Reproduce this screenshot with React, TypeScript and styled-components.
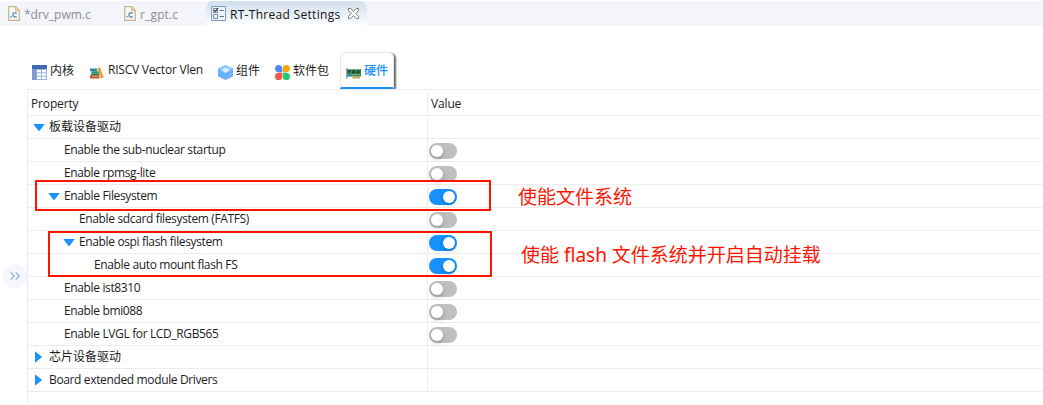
import React from "react";
import styled, { createGlobalStyle } from "styled-components";

const Global = createGlobalStyle`
  * { box-sizing: border-box; }
  body { margin: 0; background: #fff; overflow: hidden; }
  svg { display: block; flex: none; }
`;

const Page = styled.main`
  position: relative;
  width: 1043px;
  height: 405px;
  display: flex;
  flex-direction: column;
  background: #fff;
  color: #1c1c1c;
  font-family: "Open Sans", "Noto Sans CJK SC", sans-serif;
  font-size: 12px;
`;

const Label = styled.span<{ $track?: number }>`
  white-space: pre;
  letter-spacing: ${(p) => p.$track ?? 0}px;
`;

const EditorBar = styled.header`
  height: 26px;
  padding-top: 1px;
  display: flex;
  background: linear-gradient(#fff 1px, #f4f5fb 1px);
  border-top-left-radius: 6px;
`;

const EditorTab = styled.div<{ $width: number; $active?: boolean }>`
  width: ${(p) => p.$width}px;
  height: 25px;
  padding-left: ${(p) => (p.$active ? 5 : 8)}px;
  display: flex;
  align-items: center;
  gap: 4px;
  color: ${(p) => (p.$active ? "#111" : "#8b8c92")};
  background: ${(p) => (p.$active ? "linear-gradient(#d0dfed, #fff)" : "transparent")};
  border-radius: ${(p) => (p.$active ? "7px 7px 0 0" : "0")};

  ${Label} {
    padding-top: 2px;
  }
`;

const CloseSlot = styled.span`
  margin-left: 3px;
`;

const CategoryBar = styled.nav`
  height: 63px;
  padding-left: 28px;
  display: flex;
  align-items: flex-end;
`;

const Category = styled.div<{ $width: number; $active?: boolean }>`
  width: ${(p) => p.$width}px;
  height: 37px;
  padding: 0 0 0 ${(p) => (p.$active ? 5 : 4)}px;
  display: flex;
  align-items: center;
  gap: 3px;
  color: ${(p) => (p.$active ? "#1890ff" : "#1c1c1c")};
  font-weight: ${(p) => (p.$active ? 500 : 400)};
  border: ${(p) => (p.$active ? "1px solid #e6e6e6" : "0")};
  border-bottom: 2px solid ${(p) => (p.$active ? "#1890ff" : "transparent")};
  border-radius: ${(p) => (p.$active ? "6px 6px 0 0" : "0")};
  box-shadow: ${(p) => (p.$active ? "2px 1px 2px -0.5px #666" : "none")};
  clip-path: inset(-4px -6px 0 -4px);

  svg {
    margin-top: 6px;
  }
`;

const Table = styled.section`
  margin-left: 27px;
  border-left: 1px solid #ececec;
  height: 316px;
`;

const Row = styled.div<{ $head?: boolean }>`
  display: grid;
  grid-template-columns: 399px 1fr;
  height: ${(p) => (p.$head ? 27 : 23)}px;
  border-top: ${(p) => (p.$head ? "1px solid #ececec" : "0")};
  border-bottom: 1px solid #ececec;
`;

const NameCell = styled.div<{ $indent: number; $head?: boolean }>`
  display: flex;
  align-items: center;
  padding-left: ${(p) => p.$indent}px;
  padding-top: ${(p) => (p.$head ? 1 : 0)}px;
`;

const ValueCell = styled.div<{ $head?: boolean }>`
  display: flex;
  align-items: center;
  border-left: 1px solid #ececec;
  margin: ${(p) => (p.$head ? "3px 0 2px" : "0")};
  padding-left: ${(p) => (p.$head ? 3 : 1)}px;
  padding-top: ${(p) => (p.$head ? 0 : 2)}px;
`;

const ItemText = styled(Label)`
  margin-top: -2px;
`;

const Caret = styled.span`
  width: 16px;
  display: flex;
`;

const Switch = styled.span<{ $on: boolean }>`
  width: 28px;
  height: 16px;
  padding: 2px;
  display: flex;
  justify-content: ${(p) => (p.$on ? "flex-end" : "flex-start")};
  border-radius: 8px;
  background: ${(p) => (p.$on ? "#1890ff" : "#bfbfbf")};
`;

const Knob = styled.span`
  width: 12px;
  height: 12px;
  border-radius: 6px;
  background: #fff;
  box-shadow: 0 2px 4px rgba(0, 35, 11, 0.25);
`;

const Expander = styled.button`
  position: absolute;
  left: 3px;
  top: 264px;
  width: 24px;
  height: 24px;
  padding: 0;
  border: 0;
  border-radius: 12px;
  background: #f4f6fb;
  display: flex;
  align-items: center;
  justify-content: center;
`;

const Frame = styled.div<{ $x: number; $y: number; $w: number; $h: number }>`
  position: absolute;
  left: ${(p) => p.$x}px;
  top: ${(p) => p.$y}px;
  width: ${(p) => p.$w}px;
  height: ${(p) => p.$h}px;
  border: 2px solid #ff1400;
`;

const Note = styled.div<{ $x: number; $y: number }>`
  position: absolute;
  left: ${(p) => p.$x}px;
  top: ${(p) => p.$y}px;
  height: 24px;
  line-height: 24px;
  font-family: "Noto Sans", "Noto Sans CJK SC", sans-serif;
  font-size: 19px;
  color: #ff1400;
  white-space: pre;
`;

const CFileIcon = () => (
  <svg width="12" height="15" viewBox="0 0 12 15">
    <path d="M.7.7h7l3.6 3.6v10H.7z" fill="#f4f8fb" stroke="#c4b58e" strokeWidth="1.2" />
    <path d="M7.5.7v4h4" fill="#e7cf98" stroke="#d7bd86" />
    <path d="M8.8 6.9H6.6Q5 6.9 5 8.5v.8q0 1.6 1.6 1.6h2.2" fill="none" stroke="#7e9fbd" strokeWidth="1.7" />
    <path d="M2.3 10h1.5v1.5H2.3z" fill="#7e9fbd" />
  </svg>
);

const SettingsIcon = () => (
  <svg width="15" height="15" viewBox="0 0 15 15">
    <path d="M.5.5h14v14H.5z" fill="#eef5fc" stroke="#7c9bbd" />
    <path d="M2.5 2.5h4v4h-4zM2.5 8.5h4v4h-4z" fill="#fff" stroke="#7b8794" />
    <path d="M3 4l1.5 1.5L7 2" fill="none" stroke="#26384c" strokeWidth="1.1" />
    <path d="M8.5 4.5H13M8.5 10.5H13" stroke="#56789e" />
  </svg>
);

const CloseIcon = () => (
  <svg width="11" height="11" viewBox="0 0 11 11">
    <path
      d="M.5 .5h2.2l2.8 2.8L8.3 .5h2.2v2.2L7.7 5.5l2.8 2.8v2.2H8.3L5.5 7.7 2.7 10.5H.5V8.3L3.3 5.5 .5 2.7z"
      fill="#fff"
      stroke="#6d6d6d"
      strokeWidth=".9"
    />
  </svg>
);

const GridIcon = () => (
  <svg width="15" height="15" viewBox="0 0 15 15">
    <path d="M0 0h15v15H0z" fill="#9db4e2" />
    <path d="M0 0h15v4H0z" fill="#3f68b2" />
    <path d="M0 4h4.500v11H0z" fill="#7f9bd3" />
    <path d="M5 5h4v2.300H5zM10 5h4v2.300h-4zM5 8.300h4v2.400H5zM10 8.300h4v2.400h-4zM5 11.700h4V14H5zM10 11.700h4V14h-4z" fill="#fff" />
  </svg>
);

const BooksIcon = () => (
  <svg width="15" height="12" viewBox="0 0 15 12">
    <path d="M0 1.500h7v2.700H0z" fill="#2f86a8" />
    <path d="M1.500 4.200h7.500v2.500H1.500z" fill="#2d9a63" />
    <path d="M1 6.700h8v1.500H1z" fill="#26734f" />
    <path d="M0 8.200h9.500V11.500H0z" fill="#c4542f" />
    <path d="M1.500 9.500h8" stroke="#e9a878" strokeWidth=".6" />
    <path d="M7.300 1.300l2.700-1L13.800 10.500l-2.800 1z" fill="#e8a13a" />
  </svg>
);

const CubeIcon = () => (
  <svg width="15" height="15" viewBox="0 0 15 15">
    <path d="M7.500 0L15 3.500v8L7.500 15 0 11.500v-8z" fill="#69b1ff" />
    <path d="M7.500 0L15 3.500 7.500 8 0 3.500z" fill="#91caff" />
    <path d="M7.500 2.500L12 5 7.500 8 3 5z" fill="#d6ebff" />
  </svg>
);

const CloverIcon = () => (
  <svg width="15" height="15" viewBox="0 0 15 15">
    <path d="M3.600 0a3.600 3.600 0 013.600 3.600v3.600H3.600a3.600 3.600 0 010-7.200z" fill="#4a8cff" />
    <path d="M11.400 0a3.600 3.600 0 010 7.200H7.800V3.600A3.600 3.600 0 0111.400 0z" fill="#f8a80b" />
    <path d="M3.600 15a3.600 3.600 0 010-7.200h3.600v3.600A3.600 3.600 0 013.600 15z" fill="#f25749" />
    <path d="M11.400 15a3.600 3.600 0 01-3.600-3.600V7.800h3.600a3.600 3.600 0 010 7.200z" fill="#23cd77" />
  </svg>
);

const CardIcon = () => (
  <svg width="15" height="11" viewBox="0 0 15 11">
    <path d="M0 0h1.200v11H0z" fill="#9da5aa" />
    <path d="M1 1h14v7.500H1z" fill="#3c8457" />
    <path d="M2 2.500h2.500v2H2zM6 2.500h3v3H6zM10.500 2.500h3v3h-3z" fill="#174c30" />
    <path d="M2 1.500h12M4.500 6.500H14" stroke="#8abd96" strokeWidth=".7" />
    <path d="M1 6h2v3H1z" fill="#3f95d8" />
    <path d="M6.500 8.500H14v2H6.500z" fill="#bda457" />
  </svg>
);

const ArrowIcon = ({ open }: { open: boolean }) =>
  open ? (
    <svg width="12" height="7" viewBox="0 0 12 7">
      <path d="M.3 0h11.400L6.800 6.500Q6 7.300 5.200 6.500z" fill="#1890ff" />
    </svg>
  ) : (
    <svg width="12" height="12" viewBox="0 0 12 12">
      <path d="M2 .3v11.400L8.500 6.600Q9 6 8.500 5.400z" fill="#1890ff" />
    </svg>
  );

type Item = { text: string; indent: number; open?: boolean; on?: boolean; track?: number };

const items: Item[] = [
  { text: "板载设备驱动", indent: 5, open: true, track: 0 },
  { text: "Enable the sub-nuclear startup", indent: 36, on: false },
  { text: "Enable rpmsg-lite", indent: 36, on: false },
  { text: "Enable Filesystem", indent: 20, open: true, on: true },
  { text: "Enable sdcard filesystem (FATFS)", indent: 51, on: false },
  { text: "Enable ospi flash filesystem", indent: 35, open: true, on: true },
  { text: "Enable auto mount flash FS", indent: 66, on: true },
  { text: "Enable ist8310", indent: 36, on: false },
  { text: "Enable bmi088", indent: 36, on: false },
  { text: "Enable LVGL for LCD_RGB565", indent: 36, on: false },
  { text: "芯片设备驱动", indent: 5, open: false, track: 0 },
  { text: "Board extended module Drivers", indent: 5, open: false },
];

export default function App() {
  return (
    <Page>
      <Global />
      <EditorBar>
        <EditorTab $width={116}>
          <CFileIcon />
          <Label>*drv_pwm.c</Label>
        </EditorTab>
        <EditorTab $width={90}>
          <CFileIcon />
          <Label $track={0.15}>r_gpt.c</Label>
        </EditorTab>
        <EditorTab $width={161} $active>
          <SettingsIcon />
          <Label $track={0.3}>RT-Thread Settings</Label>
          <CloseSlot>
            <CloseIcon />
          </CloseSlot>
        </EditorTab>
      </EditorBar>
      <CategoryBar>
        <Category $width={58}>
          <GridIcon />
          <Label>内核</Label>
        </Category>
        <Category $width={128}>
          <BooksIcon />
          <Label $track={-0.22}>RISCV Vector Vlen</Label>
        </Category>
        <Category $width={57}>
          <CubeIcon />
          <Label>组件</Label>
        </Category>
        <Category $width={69}>
          <CloverIcon />
          <Label>软件包</Label>
        </Category>
        <Category $width={54} $active>
          <CardIcon />
          <Label>硬件</Label>
        </Category>
      </CategoryBar>
      <Table>
        <Row $head>
          <NameCell $indent={3} $head>
            <Label $track={-0.15}>Property</Label>
          </NameCell>
          <ValueCell $head>
            <Label $track={-0.15}>Value</Label>
          </ValueCell>
        </Row>
        {items.map((item) => (
          <Row key={item.text}>
            <NameCell $indent={item.indent}>
              {item.open !== undefined && (
                <Caret>
                  <ArrowIcon open={item.open} />
                </Caret>
              )}
              <ItemText $track={item.track ?? -0.36}>{item.text}</ItemText>
            </NameCell>
            <ValueCell>
              {item.on !== undefined && (
                <Switch $on={item.on}>
                  <Knob />
                </Switch>
              )}
            </ValueCell>
          </Row>
        ))}
      </Table>
      <Expander aria-label="Expand">
        <svg width="10" height="8" viewBox="0 0 10 8">
          <path d="M.7 .4L4.300 4 .7 7.600M5.700 .4L9.300 4 5.700 7.600" fill="none" stroke="#8cb0da" strokeWidth="1.200" />
        </svg>
      </Expander>
      <Frame $x={35} $y={180} $w={456} $h={31} />
      <Frame $x={48} $y={231} $w={444} $h={46} />
      <Note $x={518} $y={185}>使能文件系统</Note>
      <Note $x={521} $y={243}>使能 flash 文件系统并开启自动挂载</Note>
    </Page>
  );
}
